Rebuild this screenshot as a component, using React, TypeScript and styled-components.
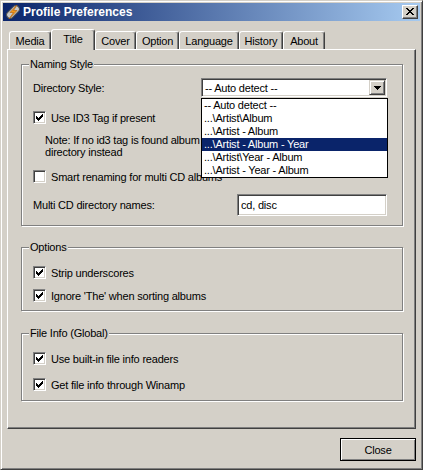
import styled, { createGlobalStyle } from 'styled-components';

const GlobalStyle = createGlobalStyle`
  html, body {
    margin: 0;
    padding: 0;
    background: #d4d0c8;
  }
  body {
    font-family: 'Liberation Sans', Arial, sans-serif;
    font-size: 11px;
    letter-spacing: -0.2px;
    color: #000;
  }
`;

const Window = styled.div`
  width: 423px;
  height: 470px;
  box-sizing: border-box;
  border: 1px solid;
  border-color: #d4d0c8 #404040 #404040 #d4d0c8;
  box-shadow: inset 1px 1px 0 #fff, inset -1px -1px 0 #808080;
  padding: 2px;
  background: #d4d0c8;
  display: flex;
  flex-direction: column;
`;

const TitleBar = styled.div`
  height: 18px;
  flex: none;
  display: flex;
  align-items: center;
  padding-left: 2px;
  background: linear-gradient(to right, #0a246a, #a6caf0);
`;

const TitleText = styled.span`
  margin-left: 2px;
  color: #fff;
  font-weight: bold;
  font-size: 12px;
  letter-spacing: 0;
`;

const CloseBox = styled.div`
  margin-left: auto;
  margin-right: 2px;
  width: 16px;
  height: 14px;
  box-sizing: border-box;
  border: 1px solid;
  border-color: #fff #404040 #404040 #fff;
  box-shadow: inset -1px -1px 0 #808080;
  background: #d4d0c8;
  display: flex;
  align-items: center;
  justify-content: center;
  padding: 0 1px 1px 0;
`;

const Body = styled.div`
  flex: 1;
  display: flex;
  flex-direction: column;
  padding: 8px 4px 0;
`;

const TabRow = styled.div`
  display: flex;
  align-items: flex-end;
  height: 20px;
  padding-left: 2px;
`;

const Tab = styled.div<{ $active?: boolean; $w: number }>`
  box-sizing: border-box;
  width: ${(p) => p.$w}px;
  height: ${(p) => (p.$active ? 21 : 18)}px;
  margin-bottom: ${(p) => (p.$active ? -1 : 0)}px;
  border: 1px solid;
  border-bottom: none;
  border-color: #fff #404040 transparent #fff;
  border-radius: 3px 3px 0 0;
  box-shadow: inset -1px 0 0 #808080;
  background: #d4d0c8;
  display: flex;
  justify-content: center;
  align-items: center;
  padding: ${(p) => (p.$active ? '0 0 2px' : '1px 0 0')};
  position: relative;
  z-index: ${(p) => (p.$active ? 2 : 1)};
`;

const Panel = styled.div`
  box-sizing: border-box;
  height: 380px;
  flex: none;
  border: 1px solid;
  border-color: #fff #404040 #404040 #fff;
  box-shadow: inset -1px -1px 0 #808080;
  padding: 8px 12px 0 13px;
`;

const Group = styled.fieldset<{ $top: number; $bottom: number }>`
  margin: ${(p) => p.$top}px 0 0;
  padding: 0 0 ${(p) => p.$bottom}px 11px;
  min-width: 0;
  border: 1px solid #808080;
  box-shadow: inset 1px 1px 0 #fff, 1px 1px 0 #fff;
`;

const Legend = styled.legend`
  margin-left: -4px;
  padding: 0 1px;
  line-height: 13px;
  background: #d4d0c8;
`;

const Row = styled.div<{ $top: number; $h: number }>`
  display: flex;
  align-items: center;
  margin-top: ${(p) => p.$top}px;
  height: ${(p) => p.$h}px;
`;

const Label = styled.span<{ $w?: number }>`
  width: ${(p) => (p.$w ? `${p.$w}px` : 'auto')};
  flex: none;
  white-space: nowrap;
`;

const CheckLabel = styled.span`
  margin-left: 5px;
  white-space: nowrap;
`;

const Note = styled.div`
  margin-top: 10px;
  padding-left: 12px;
  line-height: 12px;
  white-space: nowrap;
`;

const CheckBox = styled.span`
  box-sizing: border-box;
  width: 13px;
  height: 13px;
  flex: none;
  border: 1px solid;
  border-color: #808080 #fff #fff #808080;
  box-shadow: inset 1px 1px 0 #404040, inset -1px -1px 0 #d4d0c8;
  background: #fff;
  display: flex;
  align-items: center;
  justify-content: center;
`;

const SelectWrap = styled.div`
  position: relative;
  width: 186px;
  height: 19px;
`;

const Select = styled.div`
  box-sizing: border-box;
  height: 100%;
  border: 1px solid;
  border-color: #808080 #fff #fff #808080;
  box-shadow: inset 1px 1px 0 #404040, inset -1px -1px 0 #d4d0c8;
  background: #fff;
  display: flex;
  align-items: center;
  padding: 1px 1px 1px 3px;
`;

const SelectText = styled.span`
  flex: 1;
  white-space: nowrap;
`;

const ArrowButton = styled.div`
  box-sizing: border-box;
  width: 16px;
  height: 15px;
  border: 1px solid;
  border-color: #d4d0c8 #404040 #404040 #d4d0c8;
  box-shadow: inset 1px 1px 0 #fff, inset -1px -1px 0 #808080;
  background: #d4d0c8;
  display: flex;
  align-items: center;
  justify-content: center;
  padding-top: 1px;
`;

const DropList = styled.div`
  position: absolute;
  top: 20px;
  left: 0;
  width: 187px;
  box-sizing: border-box;
  border: 1px solid #000;
  background: #fff;
  z-index: 5;
`;

const Option = styled.div<{ $selected?: boolean }>`
  height: 13px;
  line-height: 13px;
  padding-left: 2px;
  white-space: nowrap;
  background: ${(p) => (p.$selected ? '#0a246a' : '#fff')};
  color: ${(p) => (p.$selected ? '#fff' : '#000')};
`;

const TextInput = styled.input`
  box-sizing: border-box;
  width: 150px;
  height: 22px;
  margin: 0;
  border: 1px solid;
  border-color: #808080 #fff #fff #808080;
  box-shadow: inset 1px 1px 0 #404040, inset -1px -1px 0 #d4d0c8;
  background: #fff;
  padding: 0 0 0 3px;
  font: inherit;
  letter-spacing: inherit;
  color: #000;
  outline: none;
`;

const Footer = styled.div`
  display: flex;
  justify-content: flex-end;
  margin-top: 9px;
`;

const Button = styled.button`
  box-sizing: border-box;
  width: 76px;
  height: 23px;
  border: 1px solid #000;
  box-shadow: inset 1px 1px 0 #fff, inset -1px -1px 0 #808080;
  background: #d4d0c8;
  font: inherit;
  letter-spacing: inherit;
  color: #000;
  padding: 0;
`;

const Pixels = ({ rows, color = '#000' }: { rows: string[]; color?: string }) => (
  <svg width={rows[0].length} height={rows.length} shapeRendering="crispEdges" style={{ display: 'block' }}>
    {rows.flatMap((r, y) =>
      [...r].map((c, x) =>
        c === 'X' ? <rect key={`${x}-${y}`} x={x} y={y} width={1} height={1} fill={color} /> : null
      )
    )}
  </svg>
);

const checkMark = ['......X', '.....XX', 'X...XXX', 'XX.XXX.', 'XXXXX..', '.XXX...', '..X....'];
const closeMark = ['XX....XX', '.XX..XX.', '..XXXX..', '...XX...', '..XXXX..', '.XX..XX.', 'XX....XX'];
const arrowMark = ['XXXXXXX', '.XXXXX.', '..XXX..', '...X...'];

const AppIcon = () => (
  <svg width="16" height="16" viewBox="0 0 16 16" style={{ display: 'block' }}>
    <g transform="rotate(-45 8 8)">
      <rect x="0.5" y="4.5" width="15" height="7" rx="3.5" fill="#c8c8c8" stroke="#505050" />
    </g>
    <polygon points="12,1 5,8.5 8.5,8.5 4,15 12,6.5 8.5,6.5" fill="#f59a1a" stroke="#b35a00" strokeWidth="0.6" />
  </svg>
);

const Check = ({ label, checked }: { label: string; checked?: boolean }) => (
  <>
    <CheckBox>{checked ? <Pixels rows={checkMark} /> : null}</CheckBox>
    <CheckLabel>{label}</CheckLabel>
  </>
);

const tabs = [
  { name: 'Media', w: 42 },
  { name: 'Title', w: 44 },
  { name: 'Cover', w: 41 },
  { name: 'Option', w: 43 },
  { name: 'Language', w: 60 },
  { name: 'History', w: 44 },
  { name: 'About', w: 42 },
];

const styles = [
  '-- Auto detect --',
  '...\\Artist\\Album',
  '...\\Artist - Album',
  '...\\Artist - Album - Year',
  '...\\Artist\\Year - Album',
  '...\\Artist - Year - Album',
];

function App() {
  return (
    <Window>
      <GlobalStyle />
      <TitleBar>
        <AppIcon />
        <TitleText>Profile Preferences</TitleText>
        <CloseBox>
          <Pixels rows={closeMark} />
        </CloseBox>
      </TitleBar>
      <Body>
        <TabRow>
          {tabs.map((t) => (
            <Tab key={t.name} $w={t.w} $active={t.name === 'Title'}>
              {t.name}
            </Tab>
          ))}
        </TabRow>
        <Panel>
          <Group $top={0} $bottom={9}>
            <Legend>Naming Style</Legend>
            <Row $top={7} $h={19}>
              <Label $w={168}>Directory Style:</Label>
              <SelectWrap>
                <Select>
                  <SelectText>-- Auto detect --</SelectText>
                  <ArrowButton>
                    <Pixels rows={arrowMark} />
                  </ArrowButton>
                </Select>
                <DropList>
                  {styles.map((s, i) => (
                    <Option key={s} $selected={i === 3}>
                      {s}
                    </Option>
                  ))}
                </DropList>
              </SelectWrap>
            </Row>
            <Row $top={14} $h={13}>
              <Check label="Use ID3 Tag if present" checked />
            </Row>
            <Note>
              Note: If no id3 tag is found album name is taken from the
              <br />
              directory instead
            </Note>
            <Row $top={12} $h={13}>
              <Check label="Smart renaming for multi CD albums" />
            </Row>
            <Row $top={11} $h={22}>
              <Label $w={204}>Multi CD directory names:</Label>
              <TextInput defaultValue="cd, disc" />
            </Row>
          </Group>
          <Group $top={15} $bottom={8}>
            <Legend>Options</Legend>
            <Row $top={12} $h={13}>
              <Check label="Strip underscores" checked />
            </Row>
            <Row $top={10} $h={13}>
              <Check label="Ignore 'The' when sorting albums" checked />
            </Row>
          </Group>
          <Group $top={16} $bottom={9}>
            <Legend>File Info (Global)</Legend>
            <Row $top={12} $h={13}>
              <Check label="Use built-in file info readers" checked />
            </Row>
            <Row $top={13} $h={13}>
              <Check label="Get file info through Winamp" checked />
            </Row>
          </Group>
        </Panel>
        <Footer>
          <Button>Close</Button>
        </Footer>
      </Body>
    </Window>
  );
}

export default App;
